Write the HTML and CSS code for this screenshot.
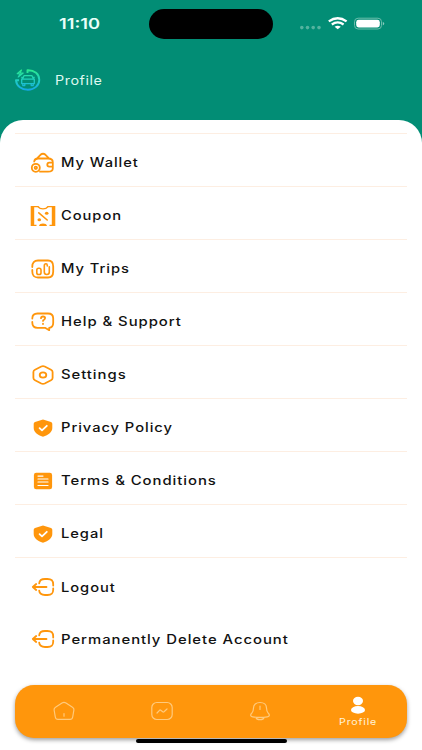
FILE: index.html
```html
<!DOCTYPE html>
<html lang="en">
<head>
<meta charset="utf-8">
<title>Profile</title>
<link rel="stylesheet" href="styles.css">
</head>
<body>
<svg class="defs" aria-hidden="true">
  <defs>
    <symbol id="shield" viewBox="0 0 26 22"><path fill="#ff960c" d="M13 2.500 21 5.100Q22.300 5.500 22.300 6.800V11C22.300 15 18.600 18 13 19.800 7.400 18 3.700 15 3.700 11V6.800Q3.700 5.500 5 5.100Z"/><path class="white-line" d="m9.600 11.100 2.400 2.200 4.800-4.500"/></symbol>
    <symbol id="exit" viewBox="0 0 26 22"><path d="M9.200 7.300C9.500 4 11.200 3 15 3h2.500c4.300 0 5.700 1.500 5.700 5.500v1M23.200 12.500v1c0 4-1.400 5.500-5.700 5.500H15c-3.800 0-5.500-1-5.800-4.300M16.500 11H3M6.200 8 2.800 11l3.400 3"/></symbol>
  </defs>
</svg>
<main class="phone">
  <header class="status">
    <span class="time">11:10</span>
    <span class="island"></span>
    <svg class="signals" width="88" height="16" viewBox="0 0 88 16">
      <g fill="#54b39f"><circle cx="2.800" cy="11.600" r="1.800"/><circle cx="8.500" cy="11.600" r="1.800"/><circle cx="14.200" cy="11.600" r="1.800"/><circle cx="20" cy="11.600" r="1.800"/></g>
      <g fill="none" stroke="#fff" stroke-width="2.300"><path d="M29.800 5.400q8.900-6.400 17.800 0M32.800 8.500q5.900-4.200 11.800 0"/></g>
      <path fill="#fff" d="M35.600 10.700q3.100-2 6.200 0l-3.100 2.500z"/>
      <rect x="55.500" y="2.200" width="27" height="10.800" rx="3.600" fill="none" stroke="#6bbdac"/>
      <rect x="57.200" y="3.800" width="23.600" height="7.600" rx="2.400" fill="#fff"/>
      <path d="M83.800 5.800v3.600q3-1.800 0-3.600" fill="#8bcbbd"/>
    </svg>
  </header>
  <div class="title">
    <svg class="logo" width="28" height="26" viewBox="0 0 28 26">
      <defs><linearGradient id="g" gradientUnits="userSpaceOnUse" x1="0" y1="2" x2="0" y2="24"><stop offset="0" stop-color="#2cec8b"/><stop offset=".5" stop-color="#20cfc0"/><stop offset="1" stop-color="#15a4ea"/></linearGradient></defs>
      <g fill="none" stroke="url(#g)" stroke-width="1.900" stroke-linejoin="round">
        <path d="M13.500 6V3.200C20.500 3 25.300 7.200 25.300 12.800S20.300 22.800 14 22.800 2.500 19 2 13.300H5"/>
        <path d="m7.500 3-4.300 3.700 3 .3-2 3 5-4-3-.2z" stroke-width="1.200"/>
        <path d="m8.500 12 1.500-3.300h8l1.500 3.300M7.700 12.200h12.600v4.400H7.700zM7.300 10.500H9M19 10.500h1.700M8.800 17v1.600h2V17M17.200 17v1.600h2V17" stroke-width="1.300"/>
      </g>
    </svg>
    <span class="title-text">Profile</span>
  </div>
  <section class="sheet">
    <ul class="menu">
      <li><svg class="icon" viewBox="0 0 26 22"><path d="M4.200 9.500Q4.500 6.700 8 6.500h10q4.800 0 4.800 3.700v6q0 3.500-4.800 3.500H10M7 6.300l3.500-3.500q2.500-2 5 0L19 6.300M22.800 10.700h-3.500q-2 .2-2 2t2 2h3.500"/><circle cx="5.800" cy="15.800" r="4"/><circle cx="5.800" cy="15.800" r="1.200"/></svg><span>My Wallet</span></li>
      <li><svg class="icon" viewBox="0 0 26 22"><g fill="#ff960c" stroke="none"><path d="M.7 1h3.500v20H.7zM21.800 1h3.500v20h-3.500zM4 1h4.500q1.200 2.300 4.500 2.300t4.500-2.300H22v1.300h-3.500Q16.500 4.600 13 4.600T7.500 2.300H4zM4 19.800h2.500V21H4zM19.500 19.800H22V21h-2.500zM9 21q.7-2.400 4-2.400t4 2.400z"/><ellipse cx="16.700" cy="8.300" rx="1.800" ry="1.500"/><ellipse cx="9.300" cy="14.700" rx="1.800" ry="1.500"/></g><path d="m8.800 7.800 8.400 7.200" stroke-width="1.600"/></svg><span>Coupon</span></li>
      <li><svg class="icon" viewBox="0 0 26 22"><path d="M2.300 9V8.500Q2.300 2.500 8 2.500h10q5.200 0 5.200 6v5q0 6-5.200 6H8q-5.700 0-5.700-6V12"/><g stroke-width="1.600"><rect x="6.800" y="10.300" width="4.200" height="6.200" rx="1.800"/><path d="M17.300 8V7.500Q17.200 5.800 16 5.800q-1.700 0-1.700 2V14q0 2.500 2.500 2.500t2.500-2.500V8.800"/></g></svg><span>My Trips</span></li>
      <li><svg class="icon" viewBox="0 0 26 22"><path d="M2.300 7.500Q2.300 2.500 7.500 2.500h10.500q5.200 0 5.200 5v4.500q0 4.500-4 4.800v2.400l-4.200-2.400H7.500q-5.200 0-5.200-5V11"/><path d="M11 7.200q.1-1.700 2-1.700 2.100 0 2.100 1.600 0 1-1.100 1.600-1 .5-1 1.200M13 12.700v.3" stroke-width="1.800"/></svg><span class="wide">Help &amp; Support</span></li>
      <li><svg class="icon" viewBox="0 0 26 22"><path d="M11.300 2.500q1.700-.8 3.400 0l6.300 3.200q1.600.8 1.600 2.200v6.200q0 1.400-1.600 2.200l-6.300 3.200q-1.700.8-3.400 0L5 16.300q-1.600-.8-1.600-2.200V7.900q0-1.400 1.600-2.200z"/><ellipse cx="13" cy="11" rx="3.300" ry="2.700"/></svg><span class="wide">Settings</span></li>
      <li><svg class="icon"><use href="#shield"/></svg><span>Privacy Policy</span></li>
      <li><svg class="icon" viewBox="0 0 26 22"><rect x="3.900" y="2.700" width="18.200" height="16.600" rx="2.300" fill="#ff960c" stroke="none"/><path class="white-line thin" d="M8 6.100h5M8 9h10M8 12h10M8 15.500h10"/></svg><span class="wide">Terms &amp; Conditions</span></li>
      <li><svg class="icon"><use href="#shield"/></svg><span>Legal</span></li>
      <li class="plain"><svg class="icon"><use href="#exit"/></svg><span>Logout</span></li>
      <li class="last"><svg class="icon"><use href="#exit"/></svg><span class="wide">Permanently Delete Account</span></li>
    </ul>
    <nav class="tabs">
      <span class="tab"><svg width="24" height="22" viewBox="0 0 24 22"><path d="M3.500 7.200 10 3q2-1.200 4 0l6.500 4.200q1.700 1 1.400 2.800l-1.200 7q-.4 2.400-2.700 2.400H6q-2.300 0-2.700-2.400L2.100 10q-.3-1.800 1.400-2.800zM12 13.500v2.700"/></svg></span>
      <span class="tab"><svg width="24" height="22" viewBox="0 0 24 22"><rect x="1.800" y="2.500" width="20.400" height="17" rx="5"/><path d="m7 13 2.500-2.700q.7-.6 1.300 0l1.900 1.500q.6.500 1.300-.1L17 9"/></svg></span>
      <span class="tab"><svg width="24" height="22" viewBox="0 0 24 22"><path d="M12 2.500c-4 0-6.500 2.300-6.500 5.600 0 4-1.500 4.400-2.500 6-.8 1.500 0 2.400 1.700 2.700q7.300 1.200 14.600 0c1.700-.3 2.500-1.200 1.700-2.700-1-1.600-2.500-2-2.500-6 0-3.300-2.500-5.600-6.500-5.600zM12 6v3.500M8 17.500q.5 2.200 4 2.200t4-2.200"/></svg></span>
      <span class="tab active"><svg width="16" height="18" viewBox="0 0 16 18"><ellipse cx="8" cy="5" rx="5" ry="4.200"/><ellipse cx="8" cy="13.900" rx="7" ry="3.800"/></svg><span class="tab-label">Profile</span></span>
    </nav>
    <div class="home-bar"></div>
  </section>
</main>
</body>
</html>
```
FILE: styles.css
```css
* { box-sizing: border-box; }
body { margin: 0; font-family: Inter, Roboto, sans-serif; }
.defs { position: absolute; width: 0; height: 0; }
.phone { width: 422px; height: 750px; overflow: hidden; background: #028d75; display: flex; flex-direction: column; }
.status { height: 48px; display: grid; grid-template-columns: 149px 124px 1fr; }
.time { padding: 14px 0 0 59px; font-size: 14.500px; line-height: 20px; font-weight: 600; color: #e9fff9; transform: scaleX(1.260); transform-origin: 59px 0; }
.island { margin-top: 9px; width: 124px; height: 30px; border-radius: 15px; background: #000; }
.signals { margin: 16px 0 0 26px; }
.title { height: 72px; padding: 19px 0 0 14px; display: flex; align-items: flex-start; gap: 13px; }
.title-text { font-size: 12.700px; line-height: 27px; color: #dff8f0; letter-spacing: .5px; transform: scaleX(1.130); transform-origin: left; }
.sheet { height: 630px; border-radius: 23px 23px 0 0; background: #fff; padding: 13px 15px 0; display: flex; flex-direction: column; }
.menu { list-style: none; margin: 0; padding: 0; height: 552px; flex: none; }
.menu li { height: 53.050px; border-top: 1px solid #fdeee2; padding: 5px 0 0 15px; display: flex; align-items: center; gap: 5px; font-size: 12.500px; font-weight: 500; letter-spacing: .8px; color: #111; white-space: nowrap; }
.menu li.plain { padding-top: 6px; }
.menu li.last { border-color: transparent; height: 52px; }
.menu span { transform: scaleX(1.177); transform-origin: left; }
.menu span.wide { transform: scaleX(1.190); }
.icon { width: 26px; height: 22px; flex: none; fill: none; stroke: #ff960c; stroke-width: 1.800; stroke-linecap: round; stroke-linejoin: round; overflow: visible; }
#shield path:first-child { stroke: none; }
.white-line { stroke: #fff; stroke-width: 1.800; fill: none; }
.thin { stroke-width: 1.200; }
.tabs { height: 53px; flex: none; border-radius: 19px; background: #ff960c; box-shadow: 0 2px 4px rgba(0,0,0,.38); display: grid; grid-template-columns: repeat(4, 1fr); }
.tab { display: flex; flex-direction: column; align-items: center; justify-content: center; padding-bottom: 1px; }
.tab svg { fill: none; stroke: #ffca7d; stroke-width: 1.200; stroke-linecap: round; stroke-linejoin: round; }
.tab.active { justify-content: flex-start; padding-top: 11px; }
.tab.active svg { fill: #fff; stroke: none; }
.tab-label { font-size: 9px; line-height: 15px; letter-spacing: .7px; color: #fff3d9; transform: scaleX(1.180); }
.home-bar { width: 151px; height: 4px; border-radius: 2px; background: #000; margin: 1px auto 0; }
```
